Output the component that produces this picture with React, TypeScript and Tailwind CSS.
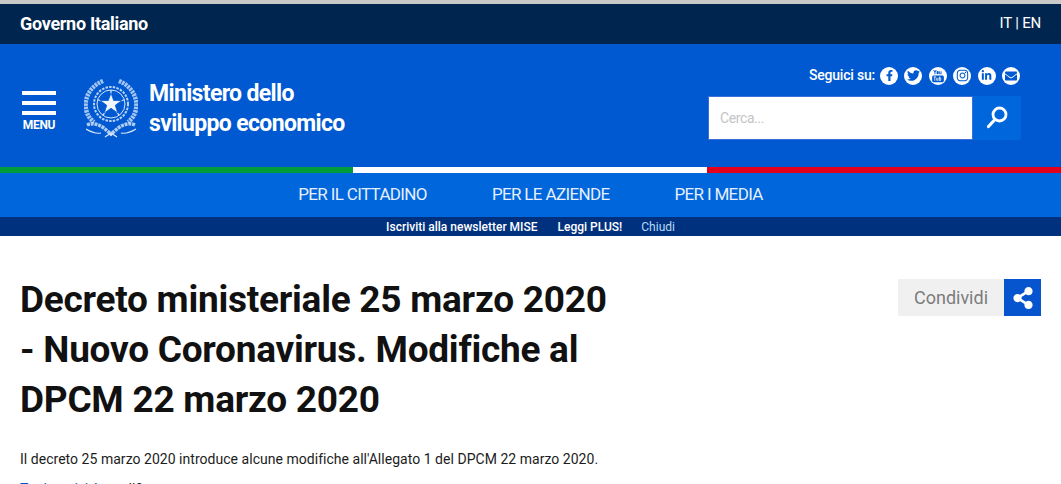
import React from 'react'
import { FaEnvelope, FaFacebookF, FaInstagram, FaLinkedinIn, FaShareAlt, FaTwitter } from 'react-icons/fa'

const font = "font-['Roboto','Noto_Sans',sans-serif]"

const YoutubeGlyph = () => (
  <svg viewBox="0 0 16 16" className="h-[14px] w-[14px]" fill="#0059d1">
    <path d="M2.5 1h1.2l.8 1.8.8-1.8h1.2L5 4v2H4V4zM7.6 2.4c.8 0 1.2.5 1.2 1.2v1.2c0 .8-.4 1.2-1.2 1.2s-1.2-.4-1.2-1.2V3.6c0-.7.4-1.2 1.2-1.2zM9.4 2.5h1v2.8c0 .3.4.2.6 0V2.5h1V6h-1v-.4c-.5.6-1.6.7-1.6-.3z" />
    <path fillRule="evenodd" d="M3 7.4h10c1 0 1.7.7 1.7 1.7v4.2c0 1-.7 1.7-1.7 1.7H3c-1 0-1.7-.7-1.7-1.7V9.100c0-1 .7-1.700 1.700-1.700zM3 8.600v.8h.9v4h.9v-4h.9v-.8zM6.200 10v2.700c0 .8 1 .8 1.500.2v.5h.8V10h-.8v2.400c-.2.2-.6.3-.6 0V10zM9.300 8.600v4.800h.8v-.3c.6.600 1.500.4 1.500-.6v-1.800c0-1-.9-1.200-1.500-.6V8.600zM10.100 10.600c.2-.2.700-.2.700.2v1.600c0 .4-.5.4-.7.2z" />
  </svg>
)

const Emblem = () => (
  <svg viewBox="0 0 54 60" className="h-[60px] w-[54px]" fill="none" stroke="#dbe8fb">
    {/* wreath left and right */}
    <path d="M19 3C7 8 0 19 2 31c1 6 4 10 8 13" strokeWidth="4.500" strokeDasharray="2.500 0.800" opacity="0.75" />
    <path d="M35 3c12 5 19 16 17 28-1 6-4 10-8 13" strokeWidth="4.500" strokeDasharray="2.500 0.800" opacity="0.75" />
    <path d="M16 7C8 12 4 20 5 30M38 7c8 5 12 13 11 23" strokeWidth="0.800" stroke="#0059d1" />
    {/* gear */}
    <circle cx="27" cy="26" r="17" strokeWidth="2" strokeDasharray="2.500 1.200" opacity="0.85" />
    <circle cx="27" cy="26" r="14" strokeWidth="1" />
    {/* big star outline with spokes */}
    <path d="M27 12v5M13.700 21.700l4.800 1.500M18.800 37.300l2.900-4M35.200 37.300l-2.900-4M40.300 21.700l-4.800 1.500" strokeWidth="1.200" />
    {/* star */}
    <path d="M27 15l2.700 7.500h8l-6.400 4.800 2.400 7.700-6.700-4.700-6.700 4.700 2.400-7.700-6.400-4.800h8z" fill="#f2f7ff" stroke="#0059d1" strokeWidth="0.800" />
    {/* ribbon */}
    <path d="M3 47c7-3 13 0 18 4l7 6" strokeWidth="3.500" strokeDasharray="3 0.800" opacity="0.8" />
    <path d="M51 47c-7-3-13 0-18 4l-7 6" strokeWidth="3.500" strokeDasharray="3 0.800" opacity="0.8" />
    <path d="M2 51c5 3 10 5 15 4M52 51c-5 3-10 5-15 4" strokeWidth="1.200" />
    <path d="M21 59l6-4 6 4" strokeWidth="1.200" />
  </svg>
)

const SearchGlyph = () => (
  <svg viewBox="0 0 22 24" className="h-[24px] w-[22px]" fill="none" stroke="white" strokeLinecap="round">
    <circle cx="13.500" cy="8.500" r="6.500" strokeWidth="2.800" />
    <path d="M8.500 14L2.500 20.500" strokeWidth="3.200" />
  </svg>
)

const socials = [
  <FaFacebookF size={11} />,
  <FaTwitter size={13} />,
  <YoutubeGlyph />,
  <FaInstagram size={13} />,
  <FaLinkedinIn size={11} />,
  <FaEnvelope size={12} />,
]

export default function App() {
  return (
    <div className={`h-[484px] overflow-hidden bg-white ${font}`}>
      <div className="h-[4px] bg-[#c9c9c9]" />

      {/* governo */}
      <div className="flex h-[40px] items-center justify-between bg-[#00264f] pb-[2px] pl-[20px] pr-[20px] text-white">
        <span className="text-[18px] font-bold tracking-[-0.3px]">Governo Italiano</span>
        <span className="text-[15px] tracking-[-0.2px]">IT | EN</span>
      </div>

      {/* header */}
      <div className="flex h-[123px] items-start justify-between bg-[#0059d1]">
        <div className="flex items-start pl-[22px] pt-[34px]">
          <div className="mt-[13px] flex w-[34px] flex-col items-center text-white">
            <div className="h-[4px] w-[34px] bg-white" />
            <div className="mt-[6px] h-[4px] w-[34px] bg-white" />
            <div className="mt-[6px] h-[4px] w-[34px] bg-white" />
            <span className="mt-[3px] text-[12px] font-bold leading-[14px] tracking-[-0.3px]">MENU</span>
          </div>
          <div className="ml-[28px]"><Emblem /></div>
          <div className="ml-[11px] mt-[1px] text-[23px] font-bold leading-[30px] tracking-[-0.65px] text-white">
            <div>Ministero dello</div>
            <div>sviluppo economico</div>
          </div>
        </div>

        <div className="flex flex-col items-end pr-[40px] pt-[21px]">
          <div className="flex items-center text-white">
            <span className="mr-[5px] text-[14px] font-medium tracking-[-0.2px]">Seguici su:</span>
            <div className="flex gap-[6.4px] pr-[1px]">
              {socials.map((icon, i) => (
                <span key={i} className="flex h-[18px] w-[18px] items-center justify-center rounded-full bg-white text-[#0059d1]">
                  {icon}
                </span>
              ))}
            </div>
          </div>
          <div className="mt-[10px] flex h-[44px]">
            <div className="flex w-[265px] items-center border border-[#3a6fd8] bg-white pl-[11px] text-[14px] tracking-[-0.4px] text-[#c4c4c4]">
              Cerca...
            </div>
            <div className="flex w-[48px] items-center justify-center bg-[#0066db]"><SearchGlyph /></div>
          </div>
        </div>
      </div>

      {/* tricolore */}
      <div className="grid h-[6px] grid-cols-[353px_354px_1fr]">
        <div className="bg-[#009d3d]" />
        <div className="bg-white" />
        <div className="bg-[#e3001b]" />
      </div>

      {/* nav */}
      <div className="flex h-[44px] items-center justify-center gap-[65px] bg-[#0066db] text-[17px] tracking-[-0.65px] text-[#e6efff]">
        <span>PER IL CITTADINO</span>
        <span>PER LE AZIENDE</span>
        <span>PER I MEDIA</span>
      </div>

      {/* newsletter */}
      <div className="flex h-[19px] items-center justify-center bg-[#00317f] text-[12px] leading-none">
        <span className="font-medium text-white">Iscriviti alla newsletter MISE</span>
        <span className="ml-[20px] font-medium text-white">Leggi PLUS!</span>
        <span className="ml-[19px] text-[#b5dcf7]">Chiudi</span>
      </div>

      {/* content */}
      <div className="flex items-start justify-between pl-[20px] pr-[20px] pt-[39px]">
        <h1 className="w-[640px] text-[37px] font-bold leading-[50px] tracking-[-0.25px] text-[#111]">
          Decreto ministeriale 25 marzo 2020<br />
          - Nuovo Coronavirus. Modifiche al<br />
          DPCM 22 marzo 2020
        </h1>
        <div className="mt-[4px] flex h-[37px]">
          <div className="flex w-[106px] items-center justify-center bg-[#f0f0f0] text-[18px] text-[#7c7c7c]">Condividi</div>
          <div className="flex w-[37px] items-center justify-center bg-[#0754cf] text-white"><FaShareAlt size={22} /></div>
        </div>
      </div>
      <p className="mt-[24px] pl-[20px] text-[14px] leading-[20px] tracking-[0.03px] text-[#1c1c1c]">
        Il decreto 25 marzo 2020 introduce alcune modifiche all'Allegato 1 del DPCM 22 marzo 2020.
      </p>
      <p className="mt-[10px] pl-[20px] text-[14px] leading-[20px] text-[#1c1c1c]">
        <span className="text-[#0059d1]">Tra le attività</span> modificate
      </p>
    </div>
  )
}
